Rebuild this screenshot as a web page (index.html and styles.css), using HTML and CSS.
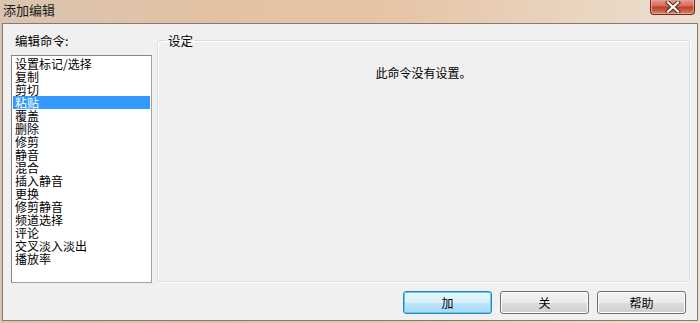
FILE: index.html
```html
<!DOCTYPE html>
<html lang="zh-CN">

<head>
    <meta charset="UTF-8">
    <title>添加编辑</title>
    <link rel="stylesheet" href="styles.css">
</head>

<body>
    <div class="frame">
        <div class="title-bar">
            <span class="title">添加编辑</span>
            <button class="close-btn" aria-label="关闭">
                <svg width="16" height="12" viewBox="0 0 16 12">
                    <path d="M3 1.5 L13 10.5 M13 1.5 L3 10.5" stroke="#5a2a20" stroke-width="4.2" stroke-linecap="square" />
                    <path d="M3 1.5 L13 10.5 M13 1.5 L3 10.5" stroke="#ffffff" stroke-width="2.2" stroke-linecap="square" />
                </svg>
            </button>
        </div>
        <div class="dialog">
            <div class="main">
                <div class="commands">
                    <div class="label">编辑命令:</div>
                    <ul class="list">
                        <li>设置标记/选择</li>
                        <li>复制</li>
                        <li>剪切</li>
                        <li class="selected">粘贴</li>
                        <li>覆盖</li>
                        <li>删除</li>
                        <li>修剪</li>
                        <li>静音</li>
                        <li>混合</li>
                        <li>插入静音</li>
                        <li>更换</li>
                        <li>修剪静音</li>
                        <li>频道选择</li>
                        <li>评论</li>
                        <li>交叉淡入淡出</li>
                        <li>播放率</li>
                    </ul>
                </div>
                <fieldset class="settings">
                    <legend>设定</legend>
                    <p class="empty">此命令没有设置。</p>
                </fieldset>
            </div>
            <div class="buttons">
                <button class="btn default">加</button>
                <button class="btn">关</button>
                <button class="btn">帮助</button>
            </div>
        </div>
    </div>
</body>

</html>
```

FILE: styles.css
```css
* {
    box-sizing: border-box;
}

body {
    margin: 0;
    width: 700px;
    height: 323px;
    overflow: hidden;
    font-family: "Noto Sans CJK SC", "DejaVu Sans", sans-serif;
    font-size: 12px;
    color: #000;
}

.frame {
    height: 323px;
    padding: 0 2px 2px 2px;
    background: linear-gradient(90deg, #dac4b0 0%, #e3c2a4 30%, #e6c4a6 55%, #e9d3bd 80%, #ebdfd0 100%);
}

.title-bar {
    height: 23px;
    display: flex;
    justify-content: space-between;
    align-items: flex-start;
}

.title {
    font-size: 13px;
    line-height: 20px;
    padding-left: 1px;
    color: #1a1a1a;
}

.close-btn {
    width: 45px;
    height: 16px;
    margin: -1px 3px 0 0;
    padding: 0;
    display: flex;
    align-items: center;
    justify-content: center;
    border: 1px solid #6e2a1f;
    border-top: none;
    border-radius: 0 0 4px 4px;
    background: linear-gradient(180deg, #e9a899 0%, #d66a55 45%, #c0402a 55%, #d9816d 100%);
    box-shadow: inset 0 0 0 1px rgba(255, 220, 210, 0.45);
}

.dialog {
    height: 298px;
    border: 1px solid #7c7c7c;
    background: #f0f0f0;
    padding: 9px 7px 6px 8px;
    display: flex;
    flex-direction: column;
}

.main {
    display: flex;
    gap: 5px;
    height: 250px;
}

.commands {
    width: 141px;
    display: flex;
    flex-direction: column;
}

.label {
    height: 22px;
    padding-left: 4px;
    font-size: 12.5px;
    line-height: 15px;
}

.list {
    flex: 1;
    margin: 0;
    padding: 1px 1px;
    list-style: none;
    background: #fff;
    border: 1px solid #828790;
    border-right-color: #a0a0a0;
    border-bottom-color: #a0a0a0;
}

.list li {
    height: 13px;
    line-height: 13px;
    padding-left: 2px;
    white-space: nowrap;
}

.list li.selected {
    background: #3399ff;
    color: #fff;
}

.settings {
    flex: 1;
    margin: 0 0 1px 0;
    padding: 0;
    height: 249px;
    border: 1px solid #d5dfe5;
    border-radius: 3px;
    box-shadow: inset 1px 1px 0 #fff, 1px 1px 0 #fff;
}

.settings legend {
    margin-left: 8px;
    padding: 0 2px;
    font-size: 12.5px;
    line-height: 15px;
}

.empty {
    margin: 18px 0 0 0;
    text-align: center;
    line-height: 14px;
}

.buttons {
    display: flex;
    justify-content: flex-end;
    gap: 8px;
    margin-top: 8px;
    padding-right: 4px;
}

.btn {
    width: 89px;
    height: 23px;
    padding: 0;
    font-family: "Noto Sans CJK SC", "DejaVu Sans", sans-serif;
    font-size: 12px;
    color: #000;
    border: 1px solid #707070;
    border-radius: 3px;
    background: linear-gradient(180deg, #f2f2f2 0%, #ebebeb 50%, #dddddd 51%, #cfcfcf 100%);
    box-shadow: inset 0 0 0 1px #fcfcfc;
}

.btn.default {
    border-color: #3c7fb1;
    background: linear-gradient(180deg, #eaf6fd 0%, #d9f0fc 50%, #bee6fd 51%, #a7d9f5 100%);
    box-shadow: inset 0 0 0 1px #48d3fb;
}
```
